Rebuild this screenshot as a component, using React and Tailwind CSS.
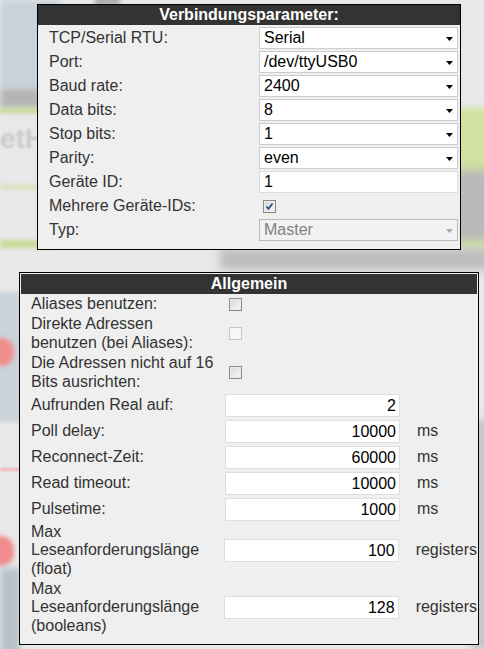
import React from 'react';

const connRows = [
  { label: 'TCP/Serial RTU:', type: 'select', value: 'Serial' },
  { label: 'Port:', type: 'select', value: '/dev/ttyUSB0' },
  { label: 'Baud rate:', type: 'select', value: '2400' },
  { label: 'Data bits:', type: 'select', value: '8' },
  { label: 'Stop bits:', type: 'select', value: '1' },
  { label: 'Parity:', type: 'select', value: 'even' },
  { label: 'Geräte ID:', type: 'input', value: '1' },
  { label: 'Mehrere Geräte-IDs:', type: 'checkbox', checked: true },
  { label: 'Typ:', type: 'select', value: 'Master', disabled: true },
];

const numberRows = [
  { label: 'Aufrunden Real auf:', value: '2', unit: '' },
  { label: 'Poll delay:', value: '10000', unit: 'ms' },
  { label: 'Reconnect-Zeit:', value: '60000', unit: 'ms' },
  { label: 'Read timeout:', value: '10000', unit: 'ms' },
  { label: 'Pulsetime:', value: '1000', unit: 'ms' },
];

const Arrow = ({ disabled }) => (
  <svg width="7" height="4" viewBox="0 0 7 4" className="absolute right-[4px] top-[9px] pointer-events-none">
    <polygon points="0,0 7,0 3.5,4" fill={disabled ? '#a8a8a8' : '#000'} />
  </svg>
);

const Select = ({ value, disabled }) => (
  <div
    className={`relative h-[22px] w-[199px] border ${
      disabled ? 'border-[#b9b9b9] bg-[#f2f2f2] text-[#808080]' : 'border-[#cdcdcd] bg-white text-black'
    } pl-[4px] text-[16px] leading-[20px] whitespace-nowrap`}
  >
    {value}
    <Arrow disabled={disabled} />
  </div>
);

const Checkbox = ({ checked, disabled }) => (
  <div
    className={`ml-[4px] w-[13px] h-[13px] border flex items-center justify-center ${
      disabled
        ? 'border-[#c4c4c4] bg-[#f6f6f6]'
        : 'border-[#8a8a8a] bg-gradient-to-br from-[#d6d6d6] to-[#f9f9f9] shadow-[inset_0_0_0_1px_#ececec]'
    }`}
  >
    {checked && (
      <svg width="9" height="9" viewBox="0 0 9 9">
        <path d="M1.5 4.5 L3.5 6.8 L7.5 1.5" stroke="#2f4f8f" strokeWidth="1.8" fill="none" />
      </svg>
    )}
  </div>
);

// blurred page behind the dialog
const Background = () => (
  <div className="absolute inset-0 overflow-hidden pointer-events-none">
    <div className="absolute left-0 top-0 w-[60px] h-[88px] bg-[#c7d2da] blur-[3px]" />
    <div className="absolute left-0 top-[88px] w-[60px] h-[20px] bg-[#b4b4b4] blur-[3px]" />
    <div className="absolute left-0 top-[108px] w-[60px] h-[5px] bg-[#c5d98e] blur-[2px]" />
    <div className="absolute left-0 top-[124px] text-[28px] font-bold leading-[30px] text-[#cacaca] blur-[1px]">etH</div>
    <div className="absolute left-0 top-[185px] w-[60px] h-[4px] bg-[#d3e0b0] blur-[2px]" />
    <div className="absolute left-0 top-[240px] w-[60px] h-[8px] bg-[#c9dc98] blur-[2px]" />
    <div className="absolute left-[95px] top-[-4px] w-[25px] h-[10px] bg-[#b0b0b0] blur-[2px]" />
    <div className="absolute left-[455px] top-[108px] w-[40px] h-[140px] bg-[#d0e1a0] blur-[3px]" />
    <div className="absolute left-[455px] top-[170px] w-[40px] h-[70px] bg-[#b9b9b9] blur-[4px]" />
    <div className="absolute left-[220px] top-[248px] w-[280px] h-[22px] bg-[#bdbdbd] blur-[5px]" />
    <div className="absolute left-[-10px] top-[292px] w-[32px] h-[130px] bg-[#c9d3d9] blur-[2px]" />
    <div className="absolute left-[-12px] top-[338px] w-[26px] h-[28px] rounded-full bg-[#f08c8c] blur-[2px]" />
    <div className="absolute left-0 top-[468px] w-[20px] h-[3px] bg-[#f2b5b5] blur-[1px]" />
    <div className="absolute left-[-12px] top-[536px] w-[26px] h-[30px] rounded-full bg-[#f08c8c] blur-[2px]" />
    <div className="absolute left-0 top-[568px] w-[20px] h-[90px] bg-[#b7c3cb] blur-[3px]" />
    <div className="absolute left-[470px] top-[420px] w-[20px] h-[230px] bg-[#c8c8c8] blur-[3px]" />
  </div>
);

export default function App() {
  return (
    <div className="relative min-h-[649px] w-full overflow-hidden bg-[#e8e8e8] font-['Liberation_Sans',Arial,sans-serif] text-[16px] text-[#333]">
      <Background />

      <div className="relative flex flex-col">
        {/* Verbindungsparameter */}
        <div className="ml-[37px] mt-[4px] w-[424px] border border-black bg-[#efefef]">
          <div className="h-[20px] bg-[#333] text-center text-white font-bold leading-[20px]">
            Verbindungsparameter:
          </div>
          <div className="pt-[1px] pb-[7px]">
            {connRows.map((row) => (
              <div key={row.label} className="flex h-[24px] items-center">
                <div className="w-[221px] pl-[11px] whitespace-nowrap">{row.label}</div>
                {row.type === 'select' && <Select value={row.value} disabled={row.disabled} />}
                {row.type === 'input' && (
                  <div className="h-[22px] w-[199px] border border-[#dcdcdc] bg-white pl-[4px] text-black leading-[20px]">
                    {row.value}
                  </div>
                )}
                {row.type === 'checkbox' && <Checkbox checked={row.checked} />}
              </div>
            ))}
          </div>
        </div>

        {/* Allgemein */}
        <div className="ml-[19px] mt-[22px] w-[460px] border border-black bg-[#efefef] p-[1px]">
          <div className="h-[20px] bg-[#333] text-center text-white font-bold leading-[20px]">Allgemein</div>
          <div className="pb-[7px] leading-[1.15]">
            <div className="flex h-[20px] items-center">
              <div className="w-[204px] pl-[10px]">
                <div className="w-[187px]">Aliases benutzen:</div>
              </div>
              <Checkbox />
            </div>
            <div className="flex h-[39px] items-center">
              <div className="w-[204px] pl-[10px]">
                <div className="w-[187px]">Direkte Adressen benutzen (bei Aliases):</div>
              </div>
              <Checkbox disabled />
            </div>
            <div className="flex h-[39px] items-center">
              <div className="w-[204px] pl-[10px]">
                <div className="w-[187px]">Die Adressen nicht auf 16 Bits ausrichten:</div>
              </div>
              <Checkbox />
            </div>

            {numberRows.map((row) => (
              <div key={row.label} className="flex h-[26px] items-center">
                <div className="w-[204px] pl-[10px] whitespace-nowrap">{row.label}</div>
                <div className="h-[23px] w-[175px] border border-[#dedede] bg-white pr-[3px] text-right text-black leading-[21px]">
                  {row.value}
                </div>
                <div className="pl-[17px] whitespace-nowrap">{row.unit}</div>
              </div>
            ))}

            {[
              { label: 'Max Leseanforderungslänge (float)', value: '100' },
              { label: 'Max Leseanforderungslänge (booleans)', value: '128' },
            ].map((row) => (
              <div key={row.label} className="flex h-[57px] items-center">
                <div className="w-[204px] pl-[10px]">
                  <div className="w-[187px]">{row.label}</div>
                </div>
                <div className="h-[23px] w-[175px] border border-[#dedede] bg-white pr-[3px] text-right text-black leading-[21px]">
                  {row.value}
                </div>
                <div className="pl-[17px] whitespace-nowrap">registers</div>
              </div>
            ))}
          </div>
        </div>
      </div>
    </div>
  );
}
